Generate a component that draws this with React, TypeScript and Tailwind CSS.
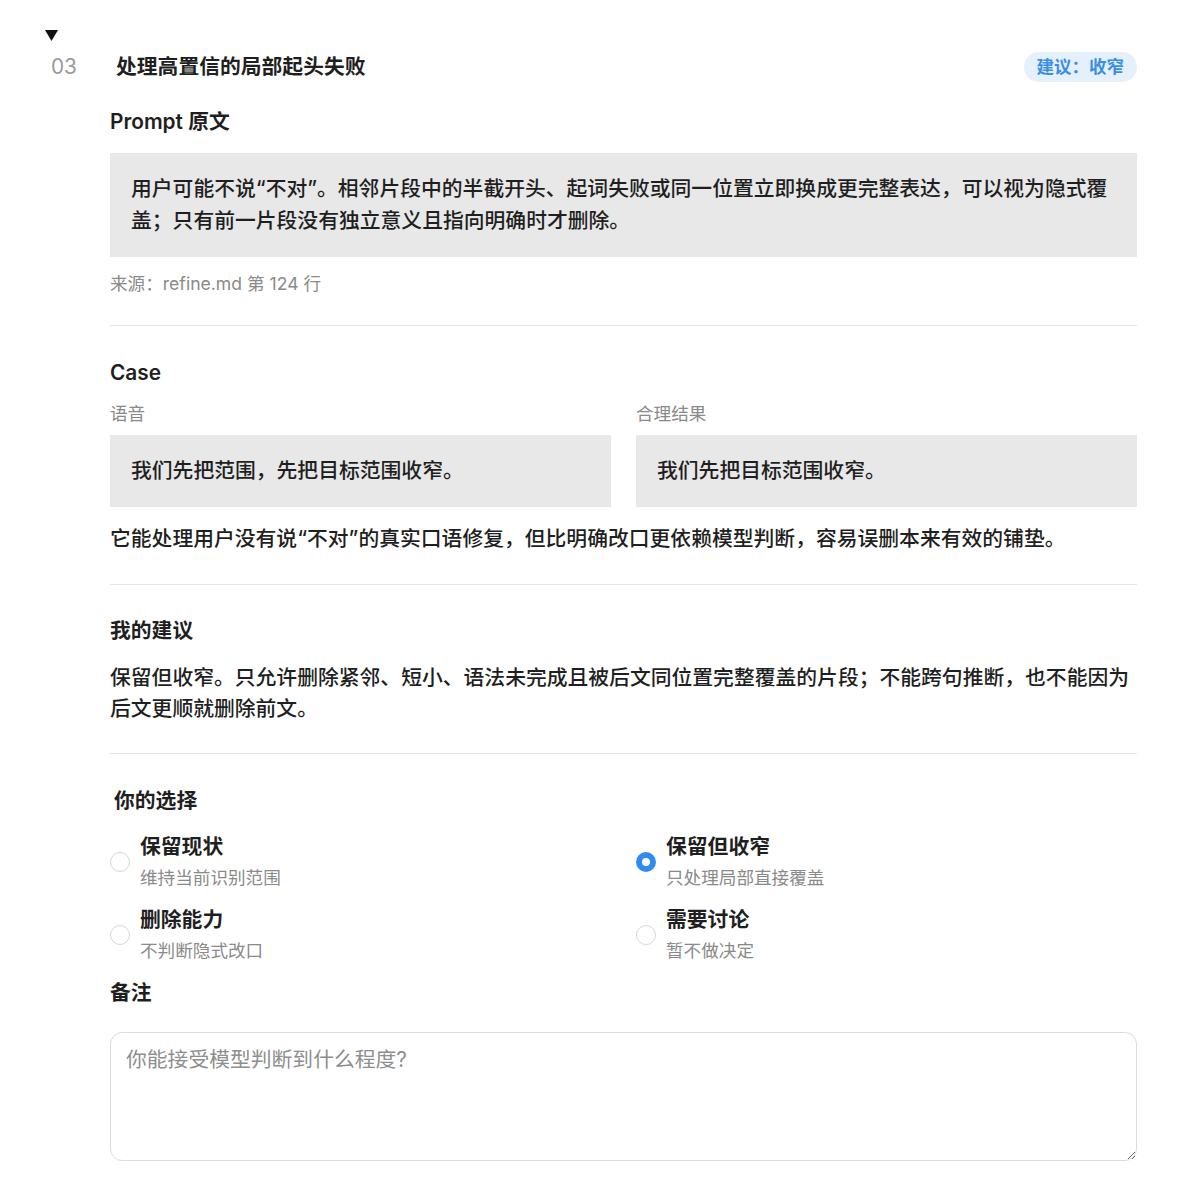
import { useState } from 'react';

type Option = { id: string; label: string; hint: string };

const options: Option[] = [
  { id: 'keep', label: '保留现状', hint: '维持当前识别范围' },
  { id: 'narrow', label: '保留但收窄', hint: '只处理局部直接覆盖' },
  { id: 'remove', label: '删除能力', hint: '不判断隐式改口' },
  { id: 'discuss', label: '需要讨论', hint: '暂不做决定' },
];

const Divider = () => <div className="h-px bg-[#e6e6e6]" />;

const Radio = ({ checked }: { checked: boolean }) =>
  checked ? (
    <span className="flex h-[20px] w-[20px] shrink-0 items-center justify-center rounded-full bg-[#2f8bf0]">
      <span className="block h-[8px] w-[8px] rounded-full bg-white" />
    </span>
  ) : (
    <span className="block h-[20px] w-[20px] shrink-0 rounded-full border border-[#d6d6d6] bg-white" />
  );

export default function App() {
  const [choice, setChoice] = useState('narrow');

  return (
    <div className="min-h-screen bg-white pl-[45px] pr-[63px] pt-[25px] pb-[26px] font-[family-name:Inter,'Noto_Sans_CJK_SC',sans-serif] font-medium text-[#1f1f1f]">
      {/* disclosure marker */}
      <div className="flex h-[20px] items-center">
        <svg width="13" height="11" viewBox="0 0 13 11">
          <polygon points="0,0 13,0 6.5,11" fill="#111" />
        </svg>
      </div>

      <div className="mt-[7px] flex h-[30px] items-center">
        <span className="w-[71px] pl-[6px] text-[20.8px] font-normal text-[#9a9a9a]">03</span>
        <span className="text-[20.8px] font-semibold">处理高置信的局部起头失败</span>
        <span className="ml-auto flex h-[30px] items-center rounded-full bg-[#e4f1fd] px-[13px] text-[17.5px] font-semibold text-[#3a8ee6]">
          建议：收窄
        </span>
      </div>

      <div className="pl-[65px]">
        <h3 className="mt-[26px] text-[20.8px] font-semibold leading-[28px]">Prompt 原文</h3>
        <div className="mt-[17px] bg-[#e8e8e8] px-[21px] py-[20px] text-[20.8px] leading-[32px]">
          用户可能不说“不对”。相邻片段中的半截开头、起词失败或同一位置立即换成更完整表达，可以视为隐式覆盖；只有前一片段没有独立意义且指向明确时才删除。
        </div>
        <p className="mt-[15px] text-[17.6px] font-normal leading-[24px] text-[#8a8a8a]">来源：refine.md 第 124 行</p>

        <div className="mt-[29px]">
          <Divider />
        </div>

        <h3 className="mt-[33px] text-[20.8px] font-semibold leading-[28px]">Case</h3>
        <div className="mt-[15px] grid grid-cols-2 gap-x-[25px]">
          <div>
            <div className="text-[17.6px] font-normal leading-[24px] text-[#8a8a8a]">语音</div>
            <div className="mt-[9px] bg-[#e8e8e8] px-[21px] py-[20px] text-[20.8px] leading-[32px]">
              我们先把范围，先把目标范围收窄。
            </div>
          </div>
          <div>
            <div className="text-[17.6px] font-normal leading-[24px] text-[#8a8a8a]">合理结果</div>
            <div className="mt-[9px] bg-[#e8e8e8] px-[21px] py-[20px] text-[20.8px] leading-[32px]">
              我们先把目标范围收窄。
            </div>
          </div>
        </div>
        <p className="mt-[16px] text-[20.8px] leading-[32px]">
          它能处理用户没有说“不对”的真实口语修复，但比明确改口更依赖模型判断，容易误删本来有效的铺垫。
        </p>

        <div className="mt-[29px]">
          <Divider />
        </div>

        <h3 className="mt-[32px] text-[20.8px] font-semibold leading-[28px]">我的建议</h3>
        <p className="mt-[17px] text-[20.8px] leading-[31px]">
          保留但收窄。只允许删除紧邻、短小、语法未完成且被后文同位置完整覆盖的片段；不能跨句推断，也不能因为后文更顺就删除前文。
        </p>

        <div className="mt-[29px]">
          <Divider />
        </div>

        <h3 className="mt-[33px] pl-[4px] text-[20.8px] font-semibold leading-[28px]">你的选择</h3>
        <div className="mt-[18px] grid grid-cols-2 gap-x-[25px] gap-y-[16px]">
          {options.map((o) => (
            <label key={o.id} className="flex cursor-pointer items-center gap-[10px]" onClick={() => setChoice(o.id)}>
              <Radio checked={choice === o.id} />
              <span className="flex flex-col">
                <span className="text-[20.8px] font-semibold leading-[28px]">{o.label}</span>
                <span className="mt-[5px] text-[17.6px] font-normal leading-[24px] text-[#8a8a8a]">{o.hint}</span>
              </span>
            </label>
          ))}
        </div>

        <h3 className="mt-[16px] text-[20.8px] font-semibold leading-[28px]">备注</h3>
        <textarea
          className="mt-[25px] block h-[129px] w-full rounded-[12px] border border-[#dcdcdc] px-[15px] py-[12px] text-[20.8px] font-normal leading-[30px] outline-none placeholder:text-[#8e8e8e]"
          placeholder="你能接受模型判断到什么程度?"
        />
      </div>
    </div>
  );
}
